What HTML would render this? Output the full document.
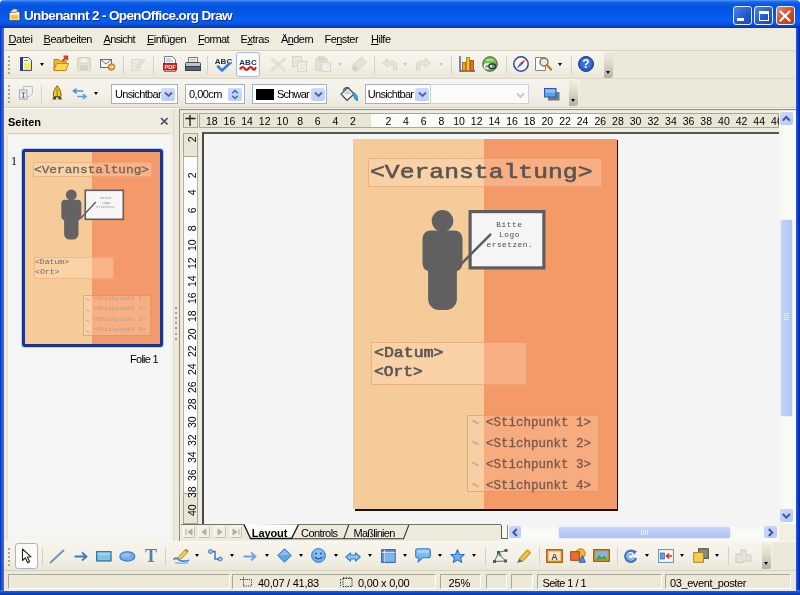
<!DOCTYPE html>
<html lang="de">
<head>
<meta charset="utf-8">
<title>Unbenannt 2 - OpenOffice.org Draw</title>
<style>
html,body{margin:0;padding:0;}
body{width:800px;height:595px;overflow:hidden;background:#ECE9D8;font-family:"Liberation Sans",sans-serif;font-size:11px;color:#000;}
#w{position:relative;width:800px;height:595px;overflow:hidden;background:#EEF1F6;will-change:transform;}
#w div,#w span,#w svg,#w i,#w b{position:absolute;box-sizing:border-box;display:block;}
#w u{text-decoration:underline;}
.t{white-space:nowrap;line-height:1;}
.m{font-family:"Liberation Mono",monospace;font-weight:bold;color:#5b5b5b;white-space:nowrap;line-height:1;}
.k{font-weight:normal;color:#5a5550;-webkit-text-stroke:0.6px #5a5550;}
.k2{font-weight:normal;color:#78584a;-webkit-text-stroke:0.3px #78584a;}
#title{left:0;top:0;width:800px;height:28px;border-radius:4px 4px 0 0;background:linear-gradient(180deg,#5a98f6 0px,#2270ee 1.5px,#0d5ee8 3px,#0454e2 6px,#0355e6 12px,#0860f2 20px,#0656e6 24px,#0343c8 26px,#0236b0 28px);}
#title .tt{left:24px;top:9px;font-size:13.5px;font-weight:bold;color:#fff;text-shadow:1px 1px 0 #10308a;}
#bl{left:0;top:28px;width:4px;height:567px;background:linear-gradient(90deg,#0a2cb0,#1a52d8 1.5px,#2866e6 3px,#3a78ea 4px);}
#br{left:796px;top:28px;width:4px;height:567px;background:linear-gradient(90deg,#2a5ee0,#1344c8 1.5px,#0a2cb0 3px,#06209a 4px);}
#bb{left:0;top:589.5px;width:800px;height:5.5px;background:linear-gradient(180deg,#4a82ec 0,#1c58de 1.5px,#1046cc 3px,#0a2ca8 5.5px);}
.wb{top:5.5px;width:19px;height:19.5px;border:1px solid #e8f0ff;border-radius:3px;}
#menu{left:4px;top:28px;width:792px;height:22px;background:#EFEBDE;}
#menu span{top:6px;font-size:11px;}
.tb{background:linear-gradient(180deg,#f6f4ec 0,#f2f0e6 60%,#e9e6d8 100%);}
.sep{width:1px;background:#d6d3c6;}
.grip i{left:0;width:2px;height:2px;background:#a9a697;}
.end{background:linear-gradient(180deg,#f0ede2 0,#e2dece 40%,#b4b0a2 100%);border-radius:0 3px 3px 0;}
.dd{width:0;height:0;border-left:2.7px solid transparent;border-right:2.7px solid transparent;border-top:3px solid #000;}
.dd.g{border-top-color:#cbc8bc;}
.cb{background:#fff;border:1px solid #9fb1c6;}
.cb .tx{left:3px;top:4px;font-size:11px;}
.cbb{top:2.5px;width:14px;height:13px;background:linear-gradient(180deg,#cfdbfb,#bfcef7);border-radius:2px;}
.st{top:573.5px;height:15.5px;border:1px solid;border-color:#aca899 #fff #fff #aca899;}
.st .tx{top:2px;font-size:11px;}
.rn{font-size:10.5px;width:20px;text-align:center;line-height:1;}
</style>
</head>
<body>
<div id="w">

<div id="title"><svg style="left:7.5px;top:7.5px" width="13" height="13.5" viewBox="0 0 13 13.5"><path d="M1 4.5 L7 2.5 L12 3.5 V12.8 H1 Z" fill="#f6e6a4" stroke="#2a3a78" stroke-width="1"/><path d="M1 4.5 L6 0.8 L10.5 1.8 L7.5 4 Z" fill="#fdfdfd" stroke="#5a5a6a" stroke-width="0.8"/><rect x="3" y="6.5" width="7" height="4.8" fill="#f5c23c"/><path d="M3 6 H10" stroke="#fff" stroke-width="1"/></svg><span class="t tt" style="letter-spacing:-0.63px">Unbenannt 2 - OpenOffice.org Draw</span>
<div class="wb" style="left:732.5px;background:linear-gradient(135deg,#4a86ee,#2456cf 60%,#1d49bd)"><i style="left:3px;top:11px;width:7.5px;height:3px;background:#fff"></i></div>
<div class="wb" style="left:754px;background:linear-gradient(135deg,#4a86ee,#2456cf 60%,#1d49bd)"><i style="left:3.5px;top:4px;width:10.5px;height:10px;border:1px solid #fff;border-top-width:3px"></i></div>
<div class="wb" style="left:775.5px;background:linear-gradient(135deg,#e8876a,#d04a26 55%,#b83a1c)"><svg style="left:2.5px;top:3px" width="12" height="12" viewBox="0 0 12 12"><path d="M1.5 1.5 L10.5 10.5 M10.5 1.5 L1.5 10.5" stroke="#fff" stroke-width="2.2" stroke-linecap="round"/></svg></div>
</div>
<div style="left:3px;top:28px;width:794px;height:564px;background:#ECE9D8"></div>
<div id="bl"></div><div id="br"></div><div id="bb"></div>
<div id="menu">
<span class="t mi" style="left:4.5px;letter-spacing:-0.34px"><u>D</u>atei</span>
<span class="t mi" style="left:39.5px;letter-spacing:-0.47px"><u>B</u>earbeiten</span>
<span class="t mi" style="left:99.5px;letter-spacing:-0.66px"><u>A</u>nsicht</span>
<span class="t mi" style="left:143.0px;letter-spacing:-0.55px"><u>E</u>infügen</span>
<span class="t mi" style="left:194.0px;letter-spacing:-0.64px"><u>F</u>ormat</span>
<span class="t mi" style="left:236.5px;letter-spacing:-0.45px">E<u>x</u>tras</span>
<span class="t mi" style="left:277.0px;letter-spacing:-0.58px">Ä<u>n</u>dern</span>
<span class="t mi" style="left:320.5px;letter-spacing:-0.54px">Fe<u>n</u>ster</span>
<span class="t mi" style="left:367.0px;letter-spacing:-0.50px"><u>H</u>ilfe</span>
</div>
<div style="left:4px;top:50px;width:792px;height:1px;background:#d8d4c4"></div>
<div class="tb" style="left:4px;top:51px;width:609px;height:27px"></div>
<div class="tb" style="left:4px;top:79px;width:575px;height:28px"></div>
<div style="left:4px;top:78px;width:792px;height:1px;background:#dcd8c8"></div>
<div style="left:4px;top:107px;width:792px;height:1px;background:#d6d2c2"></div>
<div style="left:4px;top:108px;width:792px;height:1px;background:#f8f7f2"></div>
<div class="grip" style="left:8px;top:56px;width:2px;height:20px"><i style="top:0px"></i><i style="top:4px"></i><i style="top:8px"></i><i style="top:12px"></i><i style="top:16px"></i></div>
<div class="grip" style="left:8px;top:85px;width:2px;height:20px"><i style="top:0px"></i><i style="top:4px"></i><i style="top:8px"></i><i style="top:12px"></i><i style="top:16px"></i></div>
<svg style="left:19.0px;top:56.0px" width="14" height="16" viewBox="0 0 14 16"><path d="M1.5 1.5 H9.5 L12.5 4.5 V14.5 H1.5 Z" fill="#fdfdf6" stroke="#3a4a86" stroke-width="1"/><rect x="1" y="1" width="3" height="14" fill="#2c3c7c"/><path d="M5 6.5 H12 V14 H5 Z" fill="#f0ec6c"/><path d="M5 4.5 H9" stroke="#8a8a8a" stroke-width="1"/></svg>
<i class="dd" style="left:40.0px;top:63.0px"></i>
<svg style="left:53.0px;top:55.0px" width="17" height="17" viewBox="0 0 17 17"><path d="M1 4.5 H6 L7.5 6 H13 V15.5 H1 Z" fill="#f0b530" stroke="#c07a10" stroke-width="1"/><path d="M1 15.5 L3.5 8.5 H15.5 L13 15.5 Z" fill="#fbd850" stroke="#c8881a" stroke-width="1"/><path d="M9.5 6 L14 1.5 M10.5 1.5 H14.2 V5.2" stroke="#d8401c" stroke-width="2" fill="none"/></svg>
<svg style="left:77.0px;top:57.0px" width="14" height="14" viewBox="0 0 14 14"><rect x="0.5" y="0.5" width="13" height="13" rx="1" fill="#e4e1d6" stroke="#d0cdc1"/><rect x="3" y="1" width="8" height="5" fill="#f4f2ea" stroke="#d8d5c9" stroke-width="0.8"/><rect x="3.5" y="8.5" width="7" height="5" fill="#d4d1c6" stroke="#d8d5c9" stroke-width="0.8"/></svg>
<svg style="left:100.0px;top:59.0px" width="16" height="12" viewBox="0 0 16 12"><rect x="0.5" y="0.5" width="11" height="8" fill="#f4f4f4" stroke="#6a6a7a"/><path d="M0.5 0.5 L6 5 L11.5 0.5" fill="none" stroke="#6a6a7a" stroke-width="0.9"/><circle cx="11.5" cy="8" r="3.3" fill="#e8a32c" stroke="#a86a0c" stroke-width="0.8"/><path d="M9.8 8 H13.2 M12 6.6 L13.3 8 L12 9.4" stroke="#fff" stroke-width="0.9" fill="none"/></svg>
<i class="sep" style="left:122.5px;top:56px;height:18px"></i>
<svg style="left:130.0px;top:57.0px" width="16" height="15" viewBox="0 0 16 15"><path d="M1.5 2.5 H10.5 V13.5 H1.5 Z" fill="#edebe2" stroke="#d8d5c9"/><path d="M3 6 H9 M3 8.5 H9 M3 11 H7" stroke="#e3e0d6" stroke-width="0.9"/><path d="M7 9 L13 2 L15 3.5 L9 10.5 L6.5 11.5 Z" fill="#e6e3d8" stroke="#d8d5c9" stroke-width="0.9"/></svg>
<i class="sep" style="left:153.0px;top:56px;height:18px"></i>
<svg style="left:163.0px;top:56.0px" width="14" height="16" viewBox="0 0 14 16"><path d="M1.5 0.5 H9.5 L12.5 3.5 V15.5 H1.5 Z" fill="#f8f8f8" stroke="#7a7a7a" stroke-width="1"/><path d="M3 3 H8 M3 5 H10" stroke="#9ab0d8" stroke-width="1"/><rect x="0.5" y="7.5" width="13" height="6.5" fill="#d8201c" stroke="#9a100c" stroke-width="0.8"/><text x="7" y="13" font-family="Liberation Sans,sans-serif" font-size="5.5" font-weight="bold" fill="#fff" text-anchor="middle">PDF</text></svg>
<svg style="left:185.0px;top:57.0px" width="16" height="15" viewBox="0 0 16 15"><path d="M3.5 0.5 H12.5 V6 H3.5 Z" fill="#fdfdfd" stroke="#6a6a6a" stroke-width="0.9"/><rect x="0.5" y="5.5" width="15" height="6" rx="1" fill="#bfc4cc" stroke="#4a4e58"/><rect x="0.5" y="9.5" width="15" height="4" fill="#5a6070" stroke="#3a3e48"/><path d="M5 2.5 H11 M5 4 H11" stroke="#a0a0a0" stroke-width="0.7"/></svg>
<i class="sep" style="left:207.0px;top:56px;height:18px"></i>
<svg style="left:215.0px;top:56.0px" width="17" height="17" viewBox="0 0 17 17"><text x="8.5" y="7.5" font-family="Liberation Sans,sans-serif" font-size="8" font-weight="bold" fill="#1c2e58" text-anchor="middle">ABC</text><path d="M3 10.5 L7 14.5 L14.5 7.5" fill="none" stroke="#3a7ad8" stroke-width="2.6" stroke-linecap="round" stroke-linejoin="round"/></svg>
<div style="left:236px;top:52px;width:24px;height:25px;border:1px solid #a9bde0;border-radius:3px;background:#fbfbf8"></div>
<svg style="left:239.0px;top:57.0px" width="18" height="15" viewBox="0 0 18 15"><text x="9" y="7.5" font-family="Liberation Sans,sans-serif" font-size="8" font-weight="bold" fill="#1c2e58" text-anchor="middle">ABC</text><path d="M1.5 11.5 Q3.5 8.8 5.5 11.5 T9.5 11.5 T13.5 11.5 T16.5 11" fill="none" stroke="#d81c1c" stroke-width="2.2" stroke-linecap="round"/></svg>
<svg style="left:270.0px;top:57.0px" width="17" height="15" viewBox="0 0 17 15"><path d="M2 2 L14.5 13 M14.5 2 L2 13" stroke="#e3e0d6" stroke-width="3" stroke-linecap="round"/></svg>
<svg style="left:292.0px;top:56.0px" width="16" height="16" viewBox="0 0 16 16"><rect x="0.5" y="0.5" width="9" height="10" fill="#e9e7de" stroke="#d8d5c9"/><rect x="5.5" y="5.5" width="9" height="10" fill="#efede4" stroke="#d8d5c9"/><path d="M7.5 8.5 H12.5 M7.5 10.5 H12.5 M7.5 12.5 H12.5" stroke="#e3e0d6" stroke-width="0.8"/></svg>
<svg style="left:315.0px;top:56.0px" width="17" height="16" viewBox="0 0 17 16"><rect x="0.5" y="2.5" width="12" height="12" rx="1" fill="#e2dfd4" stroke="#d8d5c9"/><rect x="3.5" y="0.5" width="6" height="4" fill="#d8d5ca" stroke="#d8d5c9" stroke-width="0.8"/><rect x="6.5" y="6.5" width="9" height="9" fill="#f0eee6" stroke="#d8d5c9"/></svg>
<i class="dd g" style="left:338.0px;top:63.0px"></i>
<svg style="left:351.0px;top:56.0px" width="17" height="16" viewBox="0 0 17 16"><path d="M10 1 L15.5 6 L8 13.5 L2.5 8.5 Z" fill="#e4e1d6" stroke="#d8d5c9" stroke-width="1"/><path d="M2.5 8.5 L0.8 13 L4 15.5 L8 13.5 Z" fill="#d6d3c8" stroke="#d8d5c9" stroke-width="0.9"/></svg>
<i class="sep" style="left:374.0px;top:56px;height:18px"></i>
<svg style="left:381.0px;top:57.0px" width="17" height="15" viewBox="0 0 17 15"><path d="M6.5 1.5 L1.5 6 L6.5 10.5 V8 H10.5 Q12.5 8 12.5 10 V13 H15.5 V9 Q15.5 4 10.5 4 H6.5 Z" fill="#e6e3d8" stroke="#d8d5c9" stroke-width="1" stroke-linejoin="round"/></svg>
<i class="dd g" style="left:403.0px;top:63.0px"></i>
<svg style="left:415.0px;top:57.0px" width="17" height="15" viewBox="0 0 17 15"><path d="M10.5 1.5 L15.5 6 L10.5 10.5 V8 H6.5 Q4.5 8 4.5 10 V13 H1.5 V9 Q1.5 4 6.5 4 H10.5 Z" fill="#e6e3d8" stroke="#d8d5c9" stroke-width="1" stroke-linejoin="round"/></svg>
<i class="dd g" style="left:438.5px;top:63.0px"></i>
<i class="sep" style="left:451.0px;top:56px;height:18px"></i>
<svg style="left:459.0px;top:56.0px" width="16" height="16" viewBox="0 0 16 16"><path d="M1 0 V15 H16" fill="none" stroke="#3a5a9a" stroke-width="1.4"/><rect x="3.5" y="6.5" width="3" height="8" fill="#f0a030" stroke="#a85a0c" stroke-width="0.8"/><rect x="7.5" y="1.5" width="3" height="13" fill="#f0c030" stroke="#a87a0c" stroke-width="0.8"/><rect x="11.5" y="4.5" width="3" height="10" fill="#e87020" stroke="#a8400c" stroke-width="0.8"/></svg>
<svg style="left:482.0px;top:56.0px" width="16" height="16" viewBox="0 0 16 16"><circle cx="8" cy="8" r="7.3" fill="#6cb84a" stroke="#3a6a2a" stroke-width="1"/><path d="M3 4 Q8 1 13 4 Q10 6 8 5 Q5 7 3 4 Z" fill="#a8dc8a"/><rect x="2.5" y="8" width="6.5" height="4.6" rx="2.3" fill="none" stroke="#fff" stroke-width="1.5"/><rect x="7" y="8" width="6.5" height="4.6" rx="2.3" fill="none" stroke="#2a3a4a" stroke-width="1.5"/></svg>
<i class="sep" style="left:506.0px;top:56px;height:18px"></i>
<svg style="left:512.5px;top:56.0px" width="16" height="16" viewBox="0 0 16 16"><circle cx="8" cy="8" r="7.2" fill="#f6f8fc" stroke="#2a4a9a" stroke-width="1.5"/><path d="M12.5 3.5 L9 9 L7 7 Z" fill="#d8201c"/><path d="M3.5 12.5 L9 9 L7 7 Z" fill="#3a6ad8"/></svg>
<svg style="left:534.5px;top:56.0px" width="17" height="16" viewBox="0 0 17 16"><path d="M0.5 1.5 H7.5 L10.5 4.5 V14.5 H0.5 Z" fill="#fafafa" stroke="#7a7a7a" stroke-width="0.9"/><circle cx="9" cy="6" r="4" fill="#d8ecfa" stroke="#7a6a2a" stroke-width="1.3"/><path d="M12 9 L16 13.5" stroke="#b8860c" stroke-width="2.4" stroke-linecap="round"/></svg>
<i class="dd" style="left:558.0px;top:63.0px"></i>
<i class="sep" style="left:570.5px;top:56px;height:18px"></i>
<svg style="left:578.0px;top:56.0px" width="16" height="16" viewBox="0 0 16 16"><circle cx="8" cy="8" r="7.5" fill="#2a5ac8" stroke="#1a3a8a" stroke-width="1"/><circle cx="8" cy="7" r="5.5" fill="#4a7ae0" opacity="0.7"/><text x="8" y="12.2" font-family="Liberation Sans,sans-serif" font-size="12" font-weight="bold" fill="#fff" text-anchor="middle">?</text></svg>
<div class="end" style="left:604px;top:51px;width:9px;height:27px"></div>
<i class="dd" style="left:605.5px;top:71.0px"></i>
<svg style="left:18.8px;top:85.8px" width="15" height="14.5" viewBox="0 0 16 16"><path d="M4.5 0.5 H14.5 V8.5 L11.5 11.5 H4.5 Z" fill="#f2f2f0" stroke="#b4bac2" stroke-width="1"/><rect x="0.5" y="4.5" width="8" height="10" fill="#f6f6f6" stroke="#8e98aa" stroke-width="1"/><path d="M2.5 7.5 H6.5 M4.5 7.5 V12.5 M3 12.5 H6" stroke="#5a6478" stroke-width="1.1"/></svg>
<i class="sep" style="left:41.0px;top:85px;height:18px"></i>
<svg style="left:52.0px;top:85.3px" width="10.4" height="15" viewBox="0 0 10.4 15"><path d="M5.2 0.7 Q0.2 7 1.6 11.5 H8.8 Q10.2 7 5.2 0.7 Z" fill="#f2cc2e" stroke="#6e5c14" stroke-width="1"/><path d="M5.2 3.5 V11" stroke="#8a7418" stroke-width="1"/><path d="M1.2 12 H9.2 L9.8 14.6 H0.6 Z" fill="#4e4a3a"/><path d="M4 12.5 H6.4 V14.6 H4 Z" fill="#f0ede2"/></svg>
<svg style="left:71.5px;top:87.5px" width="15" height="12" viewBox="0 0 15 12"><path d="M11.5 3 H2 M4.6 0.6 L1.4 3 L4.6 5.4" fill="none" stroke="#4a92dc" stroke-width="1.5"/><path d="M5 8.5 H13.5 M10.8 6.1 L14 8.5 L10.8 10.9" fill="none" stroke="#5aa0e4" stroke-width="1.5"/></svg>
<i class="dd" style="left:94.0px;top:92.0px"></i>
<div class="cb" style="left:111px;top:84px;width:67px;height:20px"><span class="tx" style="width:46.5px;height:12px;overflow:hidden"><span class="t" style="left:0;top:0;letter-spacing:-0.66px">Unsichtbar</span></span><i class="cbb" style="left:49px"></i><svg style="left:51.5px;top:6.0px" width="9" height="7" viewBox="0 0 9 7"><path d="M1 1.5 L4.5 5 L8 1.5" fill="none" stroke="#4a62a8" stroke-width="1.8"/></svg></div>
<div class="cb" style="left:185px;top:84px;width:60px;height:20px"><span class="t tx" style="letter-spacing:-0.51px">0,00cm</span><i class="cbb" style="left:42px"></i><svg style="left:45px;top:3.5px" width="8" height="11" viewBox="0 0 8 11"><path d="M1.2 4.2 L4 1.5 L6.8 4.2 M1.2 6.8 L4 9.5 L6.8 6.8" fill="none" stroke="#4a62a8" stroke-width="1.5"/></svg></div>
<div class="cb" style="left:252px;top:84px;width:75px;height:20px"><i style="left:3px;top:4px;width:18px;height:11px;background:#000"></i><span class="t tx" style="left:24px;letter-spacing:-0.78px">Schwar</span><i class="cbb" style="left:58px"></i><svg style="left:60.5px;top:6.0px" width="9" height="7" viewBox="0 0 9 7"><path d="M1 1.5 L4.5 5 L8 1.5" fill="none" stroke="#4a62a8" stroke-width="1.8"/></svg></div>
<svg style="left:338.5px;top:85.5px" width="19.5" height="15.5" viewBox="0 0 19.5 15.5"><path d="M2 8 L9 1.5 L15 8 L8 14.5 Z" fill="#f2f4f6" stroke="#4a525e" stroke-width="1.2" stroke-linejoin="round"/><path d="M4 4.5 Q7 -0.5 10 3" fill="none" stroke="#4a525e" stroke-width="1.1"/><path d="M4.5 8 L9 4 L12.5 8 Z" fill="#c8d0d8"/><path d="M14 6.5 Q19.5 8 18.5 15 Q15 13.5 14.5 9.5 Z" fill="#3aa6d4" stroke="#1a78a8" stroke-width="0.7"/></svg>
<div class="cb" style="left:365px;top:84px;width:66px;height:20px"><span class="tx" style="left:1.8px;width:46.5px;height:12px;overflow:hidden"><span class="t" style="left:0;top:0;letter-spacing:-0.71px">Unsichtbar</span></span><i class="cbb" style="left:49px"></i><svg style="left:51.5px;top:6.0px" width="9" height="7" viewBox="0 0 9 7"><path d="M1 1.5 L4.5 5 L8 1.5" fill="none" stroke="#4a62a8" stroke-width="1.8"/></svg></div>
<div class="cb" style="left:430px;top:84px;width:99px;height:20px;border-color:#c9d4e0;background:#fbfbf9"><svg style="left:85.0px;top:6.5px" width="9" height="7" viewBox="0 0 9 7"><path d="M1 1.5 L4.5 5 L8 1.5" fill="none" stroke="#c9c7bc" stroke-width="1.8"/></svg></div>
<svg style="left:544.0px;top:88.0px" width="16" height="13" viewBox="0 0 16 13"><rect x="4" y="4" width="11.5" height="8.5" fill="#6a7a8a"/><rect x="0.5" y="0.5" width="11.5" height="8.5" fill="#5aa0ea" stroke="#2a5aa8"/><rect x="1.5" y="1.5" width="9.5" height="3" fill="#9ac8f6" opacity="0.8"/></svg>
<div class="end" style="left:569px;top:80px;width:9px;height:26px"></div>
<i class="dd" style="left:570.5px;top:99.0px"></i>
<div style="left:4px;top:109px;width:169px;height:433px;background:#EFEBDE"></div>
<span class="t" style="left:8px;top:117px;font-size:11px;font-weight:bold;letter-spacing:-0.00px">Seiten</span>
<svg style="left:159.5px;top:117px" width="8.5" height="8.5" viewBox="0 0 9 9"><path d="M1 1 L8 8 M8 1 L1 8" stroke="#454c66" stroke-width="1.7"/></svg>
<div style="left:7px;top:133px;width:162px;height:1px;background:#d2cec0"></div>
<div style="left:169px;top:135px;width:3.5px;height:406px;background:#F4F3ED"></div>
<div style="left:7px;top:135px;width:162px;height:406px;background:#F5F5F3;border-left:1px solid #e2dfd4"></div>
<span class="t" style="left:11px;top:154.5px;font-family:'Liberation Serif',serif;font-size:12px">1</span>
<div style="left:21px;top:148px;width:143px;height:200px;border-radius:4px;background:#b9cdf2"></div>
<div style="left:22px;top:149px;width:141px;height:198px;border-radius:3px;background:#1c3684"></div>
<div style="left:25px;top:152px;width:67px;height:192px;background:#F6CB9A"></div>
<div style="left:92px;top:152px;width:68px;height:192px;background:#F49A6A"></div>
<div style="left:33px;top:162px;width:119px;height:15px;background:rgba(255,225,190,0.35);border:1px solid rgba(230,150,100,0.5)"></div>
<span class="m" style="left:34px;top:164.8px;font-size:10.7px;font-weight:normal;color:#6f655b;-webkit-text-stroke:0.3px #6f655b;transform-origin:0 0;transform:scaleX(1.1952)">&lt;Veranstaltung&gt;</span>
<svg style="left:25px;top:152px" width="135" height="192" viewBox="25 152 135 192">
<circle cx="71.30" cy="194.90" r="5.40" fill="#636363"/><rect x="61.30" y="199.75" width="20.00" height="20.50" rx="4.00" fill="#636363"/><rect x="64.10" y="212.00" width="14.40" height="27.50" rx="5.50" fill="#636363"/>
<rect x="85.3" y="190.3" width="38" height="29" fill="#f6f6f6" stroke="#5f5f5f" stroke-width="1.6"/>
<path d="M80.5 218.5 L95.8 202" stroke="#5f5f5f" stroke-width="1.4"/>
</svg>
<span class="m" style="left:94px;top:197.0px;width:24px;text-align:center;font-size:3.6px;font-weight:normal;color:#8a8a8a">Bitte</span>
<span class="m" style="left:94px;top:201.5px;width:24px;text-align:center;font-size:3.6px;font-weight:normal;color:#8a8a8a">Logo</span>
<span class="m" style="left:94px;top:206.0px;width:24px;text-align:center;font-size:3.6px;font-weight:normal;color:#8a8a8a">ersetzen.</span>
<div style="left:34px;top:257px;width:80px;height:22px;background:rgba(255,225,190,0.35);border:1px solid rgba(230,150,100,0.45)"></div>
<span class="m" style="left:35px;top:259.3px;font-size:7.2px;color:#6a6660;font-weight:normal;transform-origin:0 0;transform:scaleX(1.1257)">&lt;Datum&gt;</span>
<span class="m" style="left:35px;top:268.5px;font-size:7.2px;color:#6a6660;font-weight:normal;transform-origin:0 0;transform:scaleX(1.1354)">&lt;Ort&gt;</span>
<div style="left:83px;top:295px;width:68px;height:41px;background:rgba(255,215,180,0.35);border:1px solid rgba(200,120,80,0.45)"></div>
<span class="m" style="left:93px;top:295.5px;font-size:5.8px;color:#bc9c86;font-weight:normal;transform-origin:0 0;transform:scaleX(1.0882)">&lt;Stichpunkt 1&gt;</span>
<i style="left:86px;top:299.0px;width:3px;height:1px;background:#c8a890;transform:rotate(30deg)"></i>
<span class="m" style="left:93px;top:306.1px;font-size:5.8px;color:#bc9c86;font-weight:normal;transform-origin:0 0;transform:scaleX(1.0882)">&lt;Stichpunkt 2&gt;</span>
<i style="left:86px;top:309.6px;width:3px;height:1px;background:#c8a890;transform:rotate(30deg)"></i>
<span class="m" style="left:93px;top:316.7px;font-size:5.8px;color:#bc9c86;font-weight:normal;transform-origin:0 0;transform:scaleX(1.0882)">&lt;Stichpunkt 3&gt;</span>
<i style="left:86px;top:320.2px;width:3px;height:1px;background:#c8a890;transform:rotate(30deg)"></i>
<span class="m" style="left:93px;top:327.3px;font-size:5.8px;color:#bc9c86;font-weight:normal;transform-origin:0 0;transform:scaleX(1.0882)">&lt;Stichpunkt 4&gt;</span>
<i style="left:86px;top:330.8px;width:3px;height:1px;background:#c8a890;transform:rotate(30deg)"></i>
<span class="t" style="left:130px;top:354px;font-size:11px;letter-spacing:-0.72px">Folie 1</span>
<div style="left:172.5px;top:109px;width:7px;height:433px;background:#ECE9D8;border-left:1px solid #dedbce"></div>
<i style="left:175px;top:306.5px;width:2px;height:2px;background:#a4a194"></i>
<i style="left:175px;top:311.7px;width:2px;height:2px;background:#a4a194"></i>
<i style="left:175px;top:316.9px;width:2px;height:2px;background:#a4a194"></i>
<i style="left:175px;top:322.1px;width:2px;height:2px;background:#a4a194"></i>
<i style="left:175px;top:327.3px;width:2px;height:2px;background:#a4a194"></i>
<i style="left:175px;top:332.5px;width:2px;height:2px;background:#a4a194"></i>
<i style="left:175px;top:337.7px;width:2px;height:2px;background:#a4a194"></i>
<div style="left:179px;top:108.7px;width:617px;height:433px;background:#EEEBDD;border-left:1px solid #8e8b7e;border-top:1px solid #8e8b7e"></div>
<div style="left:198.5px;top:112.5px;width:580.3px;height:15.5px;background:#E9E6D6;border:1px solid #a9a694"></div>
<div style="left:371px;top:113.5px;width:228.5px;height:13.5px;background:#FBFBF8"></div>
<div style="left:183.3px;top:112.5px;width:14.7px;height:15.5px;background:#E9E6D6;border:1px solid #a9a694"></div>
<svg style="left:184px;top:114px" width="13" height="13" viewBox="0 0 13 13"><path d="M1.5 4.5 H11.5 M6 1 V12" stroke="#222" stroke-width="1.4"/></svg>
<div style="left:199px;top:113px;width:579.5px;height:15px;overflow:hidden">
<span class="t rn" style="left:144.0px;top:3px">2</span>
<span class="t rn" style="left:126.4px;top:3px">4</span>
<span class="t rn" style="left:108.7px;top:3px">6</span>
<span class="t rn" style="left:91.1px;top:3px">8</span>
<span class="t rn" style="left:73.4px;top:3px">10</span>
<span class="t rn" style="left:55.7px;top:3px">12</span>
<span class="t rn" style="left:38.1px;top:3px">14</span>
<span class="t rn" style="left:20.4px;top:3px">16</span>
<span class="t rn" style="left:2.8px;top:3px">18</span>
<span class="t rn" style="left:179.4px;top:3px">2</span>
<span class="t rn" style="left:197.0px;top:3px">4</span>
<span class="t rn" style="left:214.7px;top:3px">6</span>
<span class="t rn" style="left:232.3px;top:3px">8</span>
<span class="t rn" style="left:250.0px;top:3px">10</span>
<span class="t rn" style="left:267.7px;top:3px">12</span>
<span class="t rn" style="left:285.3px;top:3px">14</span>
<span class="t rn" style="left:303.0px;top:3px">16</span>
<span class="t rn" style="left:320.6px;top:3px">18</span>
<span class="t rn" style="left:338.3px;top:3px">20</span>
<span class="t rn" style="left:356.0px;top:3px">22</span>
<span class="t rn" style="left:373.6px;top:3px">24</span>
<span class="t rn" style="left:391.3px;top:3px">26</span>
<span class="t rn" style="left:408.9px;top:3px">28</span>
<span class="t rn" style="left:426.6px;top:3px">30</span>
<span class="t rn" style="left:444.3px;top:3px">32</span>
<span class="t rn" style="left:461.9px;top:3px">34</span>
<span class="t rn" style="left:479.6px;top:3px">36</span>
<span class="t rn" style="left:497.2px;top:3px">38</span>
<span class="t rn" style="left:514.9px;top:3px">40</span>
<span class="t rn" style="left:532.6px;top:3px">42</span>
<span class="t rn" style="left:550.2px;top:3px">44</span>
<span class="t rn" style="left:567.9px;top:3px">46</span>
</div>
<div style="left:183.3px;top:132.5px;width:14.7px;height:391.5px;background:#FBFBF8;border-left:1px solid #b4b1a0;border-right:1px solid #b4b1a0"></div>
<div style="left:183.3px;top:132.5px;width:14.7px;height:24.3px;background:#E9E6D6;border:1px solid #a9a694"></div>
<div style="left:183.3px;top:493px;width:14.7px;height:31px;background:#E9E6D6;border:1px solid #a9a694"></div>
<span class="t rn" style="left:181.6px;top:134.2px;transform:rotate(-90deg)">2</span>
<span class="t rn" style="left:181.6px;top:169.6px;transform:rotate(-90deg)">2</span>
<span class="t rn" style="left:181.6px;top:187.2px;transform:rotate(-90deg)">4</span>
<span class="t rn" style="left:181.6px;top:204.9px;transform:rotate(-90deg)">6</span>
<span class="t rn" style="left:181.6px;top:222.5px;transform:rotate(-90deg)">8</span>
<span class="t rn" style="left:181.6px;top:240.2px;transform:rotate(-90deg)">10</span>
<span class="t rn" style="left:181.6px;top:257.9px;transform:rotate(-90deg)">12</span>
<span class="t rn" style="left:181.6px;top:275.5px;transform:rotate(-90deg)">14</span>
<span class="t rn" style="left:181.6px;top:293.2px;transform:rotate(-90deg)">16</span>
<span class="t rn" style="left:181.6px;top:310.8px;transform:rotate(-90deg)">18</span>
<span class="t rn" style="left:181.6px;top:328.5px;transform:rotate(-90deg)">20</span>
<span class="t rn" style="left:181.6px;top:346.2px;transform:rotate(-90deg)">22</span>
<span class="t rn" style="left:181.6px;top:363.8px;transform:rotate(-90deg)">24</span>
<span class="t rn" style="left:181.6px;top:381.5px;transform:rotate(-90deg)">26</span>
<span class="t rn" style="left:181.6px;top:399.1px;transform:rotate(-90deg)">28</span>
<span class="t rn" style="left:181.6px;top:416.8px;transform:rotate(-90deg)">30</span>
<span class="t rn" style="left:181.6px;top:434.5px;transform:rotate(-90deg)">32</span>
<span class="t rn" style="left:181.6px;top:452.1px;transform:rotate(-90deg)">34</span>
<span class="t rn" style="left:181.6px;top:469.8px;transform:rotate(-90deg)">36</span>
<span class="t rn" style="left:181.6px;top:487.4px;transform:rotate(-90deg)">38</span>
<span class="t rn" style="left:181.6px;top:505.1px;transform:rotate(-90deg)">40</span>
<div style="left:202px;top:132px;width:576.8px;height:391.8px;background:#F4F4F4;border-left:2px solid #4a4a46;border-top:2px solid #55554f"></div>
<div style="left:355px;top:139.5px;width:263px;height:371.5px;background:#111"></div>
<div style="left:353px;top:139px;width:131px;height:370px;background:#F6CB9A"></div>
<div style="left:484px;top:139px;width:132.5px;height:370px;background:#F49A68"></div>
<div style="left:367.5px;top:157.5px;width:234px;height:29.5px;background:rgba(255,225,195,0.30);border:1px solid rgba(226,150,100,0.55)"></div>
<span class="m k" style="left:369.5px;top:161.6px;font-size:21px;transform-origin:0 0;transform:scaleX(1.1771)">&lt;Veranstaltung&gt;</span>
<svg style="left:353px;top:139px" width="263" height="370" viewBox="353 139 263 370">
<circle cx="442.50" cy="220.80" r="10.80" fill="#606060"/><rect x="422.50" y="230.50" width="40.00" height="41.00" rx="8.00" fill="#606060"/><rect x="428.10" y="255.00" width="28.80" height="55.00" rx="11.00" fill="#606060"/>
<rect x="470.1" y="211.6" width="73.8" height="56.3" fill="#f5f5f5" stroke="#5e5e5e" stroke-width="3.2"/>
<path d="M460.4 264.8 L490.3 234.6" stroke="#5e5e5e" stroke-width="2.5" stroke-linecap="round"/>
</svg>
<span class="m" style="left:496.3px;top:222.0px;font-size:7.8px;font-weight:normal;color:#4e4e4e;letter-spacing:0.56px">Bitte</span>
<span class="m" style="left:499.0px;top:231.7px;font-size:7.8px;font-weight:normal;color:#4e4e4e;letter-spacing:0.57px">Logo</span>
<span class="m" style="left:486.6px;top:241.6px;font-size:7.8px;font-weight:normal;color:#4e4e4e;letter-spacing:0.49px">ersetzen.</span>
<div style="left:371px;top:342px;width:156px;height:42.5px;background:rgba(255,225,195,0.30);border:1px solid rgba(226,150,100,0.55)"></div>
<span class="m k" style="left:374px;top:346.4px;font-size:14.4px;transform-origin:0 0;transform:scaleX(1.1497)">&lt;Datum&gt;</span>
<span class="m k" style="left:374px;top:364.6px;font-size:14.4px;transform-origin:0 0;transform:scaleX(1.1276)">&lt;Ort&gt;</span>
<div style="left:466.5px;top:415px;width:132.5px;height:77px;background:rgba(255,220,190,0.28);border:1px solid rgba(215,135,95,0.55)"></div>
<span class="m k2" style="left:485.5px;top:416.5px;font-size:12.2px;transform-origin:0 0;transform:scaleX(1.0253)">&lt;Stichpunkt 1&gt;</span>
<i style="left:472px;top:421.3px;width:7px;height:2px;background:#d7a88a;transform:rotate(28deg)"></i>
<span class="m k2" style="left:485.5px;top:437.5px;font-size:12.2px;transform-origin:0 0;transform:scaleX(1.0253)">&lt;Stichpunkt 2&gt;</span>
<i style="left:472px;top:442.3px;width:7px;height:2px;background:#d7a88a;transform:rotate(28deg)"></i>
<span class="m k2" style="left:485.5px;top:458.5px;font-size:12.2px;transform-origin:0 0;transform:scaleX(1.0253)">&lt;Stichpunkt 3&gt;</span>
<i style="left:472px;top:463.3px;width:7px;height:2px;background:#d7a88a;transform:rotate(28deg)"></i>
<span class="m k2" style="left:485.5px;top:479.5px;font-size:12.2px;transform-origin:0 0;transform:scaleX(1.0253)">&lt;Stichpunkt 4&gt;</span>
<i style="left:472px;top:484.3px;width:7px;height:2px;background:#d7a88a;transform:rotate(28deg)"></i>
<div style="left:779px;top:110.5px;width:17px;height:413.5px;background:linear-gradient(90deg,#f3f3ef,#fafaf8 40%,#f8f8f4)"></div>
<div style="left:780px;top:111.5px;width:12.6px;height:13.4px;border-radius:2px;background:linear-gradient(135deg,#cbd9fa,#b7c8f3)"><svg style="left:0;top:0" width="12.6" height="13.4" viewBox="0 0 12.6 13.4"><path d="M2.8 8.6 L6.3 5 L9.8 8.6" fill="none" stroke="#3c55a0" stroke-width="2"/></svg></div>
<div style="left:780px;top:509px;width:12.6px;height:13.4px;border-radius:2px;background:linear-gradient(135deg,#cbd9fa,#b7c8f3)"><svg style="left:0;top:0" width="12.6" height="13.4" viewBox="0 0 12.6 13.4"><path d="M2.8 5 L6.3 8.6 L9.8 5" fill="none" stroke="#3c55a0" stroke-width="2"/></svg></div>
<div style="left:779.8px;top:218.6px;width:12.8px;height:198.4px;border-radius:2.5px;border:1px solid #e6edfd;background:linear-gradient(90deg,#c4d3f8,#bbccf6 50%,#b2c3f0)"></div>
<i style="left:783.5px;top:313px;width:5px;height:1px;background:#e4ebfc"></i>
<i style="left:783.5px;top:315px;width:5px;height:1px;background:#e4ebfc"></i>
<i style="left:783.5px;top:317px;width:5px;height:1px;background:#e4ebfc"></i>
<i style="left:783.5px;top:319px;width:5px;height:1px;background:#e4ebfc"></i>
<div style="left:181px;top:524px;width:321px;height:17px;background:#EDEADC;border-top:1px solid #77746a"></div>
<div style="left:183px;top:526px;width:12px;height:12px;border:1px solid #fbfaf5;border-right-color:#c4c0b0;border-bottom-color:#c4c0b0;border-radius:2px;background:#F1EEE2"><svg style="left:-1px;top:-1px" width="12" height="12" viewBox="0 0 12 12"><path d="M3 3 V9 M9 3 L5 6 L9 9 Z" fill="#b4b0a1" stroke="#b4b0a1" stroke-width="1"/></svg></div>
<div style="left:198px;top:526px;width:12px;height:12px;border:1px solid #fbfaf5;border-right-color:#c4c0b0;border-bottom-color:#c4c0b0;border-radius:2px;background:#F1EEE2"><svg style="left:-1px;top:-1px" width="12" height="12" viewBox="0 0 12 12"><path d="M8 3 L4 6 L8 9 Z" fill="#b4b0a1" stroke="#b4b0a1" stroke-width="1"/></svg></div>
<div style="left:214px;top:526px;width:12px;height:12px;border:1px solid #fbfaf5;border-right-color:#c4c0b0;border-bottom-color:#c4c0b0;border-radius:2px;background:#F1EEE2"><svg style="left:-1px;top:-1px" width="12" height="12" viewBox="0 0 12 12"><path d="M4 3 L8 6 L4 9 Z" fill="#b4b0a1" stroke="#b4b0a1" stroke-width="1"/></svg></div>
<div style="left:230px;top:526px;width:12px;height:12px;border:1px solid #fbfaf5;border-right-color:#c4c0b0;border-bottom-color:#c4c0b0;border-radius:2px;background:#F1EEE2"><svg style="left:-1px;top:-1px" width="12" height="12" viewBox="0 0 12 12"><path d="M3 3 L7 6 L3 9 Z M9 3 V9" fill="#b4b0a1" stroke="#b4b0a1" stroke-width="1"/></svg></div>
<svg style="left:240px;top:524px" width="180" height="17" viewBox="240 524 180 17"><path d="M244 524 L250.5 538.5 H291.5 L298 524.5 Z" fill="#FBFBF8"/><path d="M244 524.5 L250.5 538.5 H291.5 L298.3 525" fill="none" stroke="#111" stroke-width="1.3"/><path d="M292 538.7 H343.8 L348.7 525" fill="none" stroke="#333" stroke-width="1.1"/><path d="M344 538.7 H403.6 L408.8 525" fill="none" stroke="#333" stroke-width="1.1"/></svg>
<span class="t" style="left:251.8px;top:527.5px;font-size:11px;font-weight:bold;letter-spacing:-0.09px">Layout</span>
<span class="t" style="left:301px;top:527.5px;font-size:11px;letter-spacing:-0.56px">Controls</span>
<span class="t" style="left:353.5px;top:527.5px;font-size:11px;letter-spacing:-0.74px">Maßlinien</span>
<div style="left:501px;top:524px;width:7px;height:17px;background:#F4F3EC"></div><div style="left:501px;top:524.5px;width:7px;height:14.5px;background:#F7F6F0;border-left:1px solid #5c594e;border-bottom:1px solid #5c594e;border-right:1px solid #8a877a"></div>
<div style="left:508px;top:524px;width:271px;height:17px;background:linear-gradient(180deg,#f3f3ef,#fafaf8 40%,#f8f8f4)"></div>
<div style="left:508.8px;top:526px;width:12.6px;height:12.4px;border-radius:2px;background:linear-gradient(135deg,#cbd9fa,#b7c8f3)"><svg style="left:0;top:0" width="12.6" height="13.4" viewBox="0 0 12.6 13.4"><path d="M7.8 3 L4.4 6.5 L7.8 10" fill="none" stroke="#3c55a0" stroke-width="2"/></svg></div>
<div style="left:764px;top:526px;width:12.6px;height:12.4px;border-radius:2px;background:linear-gradient(135deg,#cbd9fa,#b7c8f3)"><svg style="left:0;top:0" width="12.6" height="13.4" viewBox="0 0 12.6 13.4"><path d="M4.8 3 L8.2 6.5 L4.8 10" fill="none" stroke="#3c55a0" stroke-width="2"/></svg></div>
<div style="left:558px;top:526px;width:172.5px;height:12.5px;border-radius:2.5px;border:1px solid #e6edfd;background:linear-gradient(180deg,#c6d5fa,#bbccf6 50%,#b2c3f0)"></div>
<i style="left:641px;top:529.5px;width:1px;height:5px;background:#e4ebfc"></i>
<i style="left:643px;top:529.5px;width:1px;height:5px;background:#e4ebfc"></i>
<i style="left:645px;top:529.5px;width:1px;height:5px;background:#e4ebfc"></i>
<i style="left:647px;top:529.5px;width:1px;height:5px;background:#e4ebfc"></i>
<div style="left:779px;top:524px;width:17px;height:17px;background:#F2EFE3"></div>
<div style="left:4px;top:541px;width:792px;height:1px;background:#f8f7f2"></div>
<div class="tb" style="left:4px;top:542px;width:768px;height:28px"></div>
<div class="grip" style="left:8px;top:548px;width:2px;height:20px"><i style="top:0px"></i><i style="top:4px"></i><i style="top:8px"></i><i style="top:12px"></i><i style="top:16px"></i></div>
<div style="left:15px;top:543px;width:23px;height:26px;border:1px solid #a9b4c8;border-radius:3px;background:#fcfcfa"></div>
<svg style="left:21.0px;top:548.0px" width="11" height="16" viewBox="0 0 11 16"><path d="M1.5 1 V12.5 L4.3 9.8 L6.6 14.8 L8.6 13.8 L6.4 9 L10 8.8 Z" fill="#fff" stroke="#222" stroke-width="1.1" stroke-linejoin="round"/></svg>
<i class="sep" style="left:41.5px;top:547px;height:18px"></i>
<svg style="left:49.0px;top:548.5px" width="16" height="15" viewBox="0 0 16 15"><path d="M1 14 L15 1" stroke="#6f8fbf" stroke-width="1.8"/></svg>
<svg style="left:74.0px;top:551.0px" width="14" height="11" viewBox="0 0 14 11"><path d="M0.5 5.5 H12 M8 1.5 L12.5 5.5 L8 9.5" fill="none" stroke="#3f78b8" stroke-width="1.8"/></svg>
<svg style="left:96.0px;top:551.0px" width="16" height="11" viewBox="0 0 16 11"><rect x="0.7" y="0.7" width="14.3" height="9.3" fill="#7cc4e2" stroke="#2f6a9c" stroke-width="1.2"/><rect x="1.5" y="1.5" width="12.7" height="3" fill="#a8dcf0" opacity=".7"/></svg>
<svg style="left:119.0px;top:551.0px" width="17" height="11" viewBox="0 0 17 11"><ellipse cx="8.3" cy="5.4" rx="7.5" ry="4.7" fill="#6faeea" stroke="#3f7ac8" stroke-width="1.1"/><ellipse cx="7" cy="4" rx="4.5" ry="2" fill="#9acaf6" opacity=".7"/></svg>
<span class="t" style="left:145px;top:547px;font-family:'Liberation Serif',serif;font-weight:bold;font-size:18px;color:#5c7eae">T</span>
<i class="sep" style="left:165.0px;top:547px;height:18px"></i>
<svg style="left:173.0px;top:547.5px" width="17" height="16" viewBox="0 0 17 16"><path d="M1 11 Q3 9.5 5 11 Q8 14.5 15.5 12.5" fill="none" stroke="#3f8ad8" stroke-width="1.8" stroke-linecap="round"/><path d="M2 14.5 Q8 16 15 14.8" fill="none" stroke="#7ab8ee" stroke-width="1.4"/><path d="M5.5 9 L12.5 1.5 L15 3.8 L8 11 L5 11.5 Z" fill="#f2cf4c" stroke="#a8842a" stroke-width="0.9"/><path d="M12.5 1.5 L15 3.8" stroke="#d8705a" stroke-width="2"/></svg>
<i class="dd" style="left:195.0px;top:554.0px"></i>
<svg style="left:208.0px;top:549.0px" width="15" height="13" viewBox="0 0 15 13"><path d="M2.5 2.5 H7 V10 H12.5" fill="none" stroke="#3f78b8" stroke-width="1.5"/><circle cx="2.5" cy="2.5" r="2" fill="#9acaf4" stroke="#3f78b8" stroke-width="1"/><circle cx="12.2" cy="10" r="2" fill="#9acaf4" stroke="#3f78b8" stroke-width="1"/></svg>
<i class="dd" style="left:230.0px;top:554.0px"></i>
<svg style="left:243.0px;top:551.0px" width="14" height="11" viewBox="0 0 14 11"><path d="M0.5 5.5 H12 M8 1.5 L12.5 5.5 L8 9.5" fill="none" stroke="#6aa6e2" stroke-width="1.8"/></svg>
<i class="dd" style="left:264.5px;top:554.0px"></i>
<svg style="left:276.5px;top:547.5px" width="15" height="15" viewBox="0 0 15 15"><path d="M7.5 0.7 L14.3 7.5 L7.5 14.3 L0.7 7.5 Z" fill="#5fa6e6" stroke="#3a78c0" stroke-width="1"/><path d="M7.5 2 L12.5 7 H2.5 Z" fill="#94c8f4" opacity=".8"/></svg>
<i class="dd" style="left:298.5px;top:554.0px"></i>
<svg style="left:311.0px;top:548.0px" width="15" height="15" viewBox="0 0 15 15"><circle cx="7.5" cy="7.5" r="6.9" fill="#6cb0ec" stroke="#3a78c4" stroke-width="1"/><circle cx="7.5" cy="6" r="4.8" fill="#9ccef6" opacity=".6"/><circle cx="5" cy="5.6" r="1" fill="#1f4f96"/><circle cx="10" cy="5.6" r="1" fill="#1f4f96"/><path d="M4 9 Q7.5 12.5 11 9" fill="none" stroke="#1f4f96" stroke-width="1.1"/></svg>
<i class="dd" style="left:333.5px;top:554.0px"></i>
<svg style="left:345.0px;top:551.5px" width="16" height="10" viewBox="0 0 16 10"><path d="M0.8 5 L5.5 0.8 V3 H10.5 V0.8 L15.2 5 L10.5 9.2 V7 H5.5 V9.2 Z" fill="#8ec4f2" stroke="#3a7cc8" stroke-width="1.1" stroke-linejoin="round"/></svg>
<i class="dd" style="left:367.5px;top:554.0px"></i>
<svg style="left:381.0px;top:548.5px" width="15" height="14" viewBox="0 0 15 14"><rect x="0.7" y="0.7" width="13.4" height="12.6" fill="#5f9fe4" stroke="#2f62b0" stroke-width="1.2"/><path d="M0.7 3.5 H14 M3.7 0.7 V13.3" stroke="#c8e0fa" stroke-width="1"/><rect x="4.5" y="4.3" width="9" height="8.4" fill="#7cb6ee"/></svg>
<i class="dd" style="left:402.5px;top:554.0px"></i>
<svg style="left:415.0px;top:548.0px" width="16" height="15" viewBox="0 0 16 15"><path d="M2.5 0.7 H13 Q15.3 0.7 15.3 3 V7.5 Q15.3 9.8 13 9.8 H7.5 L3 14 L4 9.8 H2.5 Q0.7 9.8 0.7 7.5 V3 Q0.7 0.7 2.5 0.7 Z" fill="#7cbcf0" stroke="#3a7cc8" stroke-width="1.1" stroke-linejoin="round"/><rect x="2" y="2" width="12" height="3" rx="1.2" fill="#b2dcfa" opacity=".7"/></svg>
<i class="dd" style="left:437.5px;top:554.0px"></i>
<svg style="left:449.5px;top:548.5px" width="15" height="14" viewBox="0 0 15 14"><path d="M7.5 0.8 L9.4 5.2 L14.2 5.6 L10.6 8.8 L11.7 13.4 L7.5 10.9 L3.3 13.4 L4.4 8.8 L0.8 5.6 L5.6 5.2 Z" fill="#6cb0ee" stroke="#2f6cc0" stroke-width="1.1" stroke-linejoin="round"/></svg>
<i class="dd" style="left:472.0px;top:554.0px"></i>
<i class="sep" style="left:484.5px;top:547px;height:18px"></i>
<svg style="left:492.0px;top:547.5px" width="17" height="16" viewBox="0 0 17 16"><path d="M2.5 13.5 L6.5 4.5 L14 2.5 M2.5 13.5 L13.5 13 L8 7" fill="none" stroke="#5a6470" stroke-width="1"/><rect x="1" y="12" width="3" height="3" fill="#4a5a6a"/><rect x="5" y="3" width="3" height="3" fill="#4a5a6a"/><rect x="12.5" y="1" width="3" height="3" fill="#4a5a6a"/><rect x="12" y="11.5" width="3" height="3" fill="#4a5a6a"/><rect x="6.7" y="5.7" width="2.6" height="2.6" fill="#3fa04a"/></svg>
<svg style="left:516.0px;top:548.0px" width="16" height="15" viewBox="0 0 16 15"><path d="M3 11 L11 2 L14.5 5 L6.5 13.5 Z" fill="#f0c040" stroke="#a87a1c" stroke-width="0.9"/><path d="M3 11 L6.5 13.5 L1 15 Z" fill="#5a6a8a"/><path d="M11 2 L14.5 5" stroke="#e8a020" stroke-width="2"/></svg>
<i class="sep" style="left:538.5px;top:547px;height:18px"></i>
<svg style="left:546.0px;top:548.5px" width="17" height="14" viewBox="0 0 17 14"><rect x="0.7" y="0.7" width="15.6" height="12.6" fill="#e8a040" stroke="#9a5a10" stroke-width="1.2"/><rect x="2.5" y="2.5" width="12" height="9" fill="#fbe8c0"/><text x="8.5" y="10.5" font-family="Liberation Sans,sans-serif" font-weight="bold" font-size="9" text-anchor="middle" fill="#2a4a9a">A</text></svg>
<svg style="left:570.0px;top:548.0px" width="16" height="15" viewBox="0 0 16 15"><circle cx="10.5" cy="5.5" r="4.8" fill="#f2b23a" stroke="#b8781a" stroke-width="0.9"/><rect x="0.7" y="3.7" width="8.6" height="8.6" fill="#e87030" stroke="#a8400c" stroke-width="1"/><path d="M9 14.3 L12.5 7.5 L15.3 14.3 Z" fill="#4a8ad8" stroke="#2a5aa8" stroke-width="0.9"/></svg>
<svg style="left:593.0px;top:549.0px" width="17" height="13" viewBox="0 0 17 13"><rect x="0.7" y="0.7" width="15.6" height="11.6" fill="#d89a30" stroke="#8a5a10" stroke-width="1.2"/><rect x="2.5" y="2.5" width="12" height="8" fill="#7ab8e8"/><path d="M2.5 10.5 L6 6 L9 8.5 L11.5 6.5 L14.5 10.5 Z" fill="#5a9a3a"/></svg>
<i class="sep" style="left:617.0px;top:547px;height:18px"></i>
<svg style="left:622.5px;top:548.5px" width="16" height="14" viewBox="0 0 16 14"><path d="M13 9 A5.5 5.5 0 1 1 11.5 3.2" fill="none" stroke="#3f78c0" stroke-width="2.4"/><path d="M10 8.3 A2.6 2.6 0 1 1 9 5.6" fill="none" stroke="#6aa6e2" stroke-width="1.6"/><path d="M9.5 0.8 L14 2.2 L11 5.8 Z" fill="#3f78c0"/></svg>
<i class="dd" style="left:645.0px;top:554.0px"></i>
<svg style="left:657.5px;top:548.5px" width="16" height="14" viewBox="0 0 16 14"><rect x="0.6" y="0.6" width="14.8" height="12.8" fill="#f8f8f4" stroke="#6a8ab8" stroke-width="1"/><rect x="2.5" y="4" width="4" height="6" fill="#5fa0e4" stroke="#2f62b0" stroke-width="0.7"/><path d="M14 7 H9 M11 4.5 L8.5 7 L11 9.5" fill="none" stroke="#d8301c" stroke-width="1.5"/></svg>
<i class="dd" style="left:680.0px;top:554.0px"></i>
<svg style="left:692.5px;top:548.0px" width="16" height="15" viewBox="0 0 16 15"><rect x="5.6" y="0.7" width="9.7" height="9.7" fill="#8a8a7a" stroke="#4a4a3a" stroke-width="1"/><rect x="0.7" y="4.6" width="9.7" height="9.7" fill="#f4d048" stroke="#a8842a" stroke-width="1"/></svg>
<i class="dd" style="left:714.5px;top:554.0px"></i>
<i class="sep" style="left:727.5px;top:547px;height:18px"></i>
<svg style="left:735.0px;top:548.5px" width="17" height="14" viewBox="0 0 17 14"><path d="M1 5 H6 V1 H11 V6 H16 V12 H8 V13.5 H1 Z" fill="#e6e3d8" stroke="#cfccbf" stroke-width="1"/><path d="M6 5 L8 7 M11 6 V9" stroke="#d6d3c8" stroke-width="1"/></svg>
<div class="end" style="left:762px;top:543px;width:9px;height:26px"></div>
<i class="dd" style="left:763.5px;top:562.0px"></i>
<div style="left:4px;top:570px;width:792px;height:1px;background:#d6d2c2"></div>
<div style="left:4px;top:571px;width:792px;height:20px;background:#ECE9D8"></div>
<div class="st" style="left:8px;width:222px"></div>
<div class="st" style="left:232px;width:204px"></div>
<div class="st" style="left:440px;width:41px"></div>
<div class="st" style="left:485.5px;width:21px"></div>
<div class="st" style="left:511px;width:22px"></div>
<div class="st" style="left:537px;width:124.5px"></div>
<div class="st" style="left:665px;width:126px"></div>
<svg style="left:239.5px;top:577.0px" width="12" height="10" viewBox="0 0 12 10"><path d="M3.5 0 V9.5 M0 2.5 H11.5" stroke="#1a3a8a" stroke-width="1" stroke-dasharray="1.2 1"/><path d="M3.5 9 H11.5 V2.5" fill="none" stroke="#4a4a4a" stroke-width="1" stroke-dasharray="1.2 1"/></svg>
<span class="t" style="left:258px;top:577.5px;font-size:11px;letter-spacing:-0.25px">40,07 / 41,83</span>
<svg style="left:339.5px;top:577.0px" width="13" height="10" viewBox="0 0 13 10"><rect x="3" y="1.5" width="9" height="8" fill="none" stroke="#333" stroke-width="1" stroke-dasharray="1.5 1"/><path d="M0.5 2 V9 M3 0.3 H12" stroke="#333" stroke-width="1" stroke-dasharray="1.5 1.5"/></svg>
<span class="t" style="left:358px;top:577.5px;font-size:11px;letter-spacing:-0.27px">0,00 x 0,00</span>
<span class="t" style="left:448.5px;top:577.5px;font-size:11px;letter-spacing:-0.18px">25%</span>
<span class="t" style="left:542.5px;top:577.5px;font-size:11px;letter-spacing:-0.55px">Seite 1 / 1</span>
<span class="t" style="left:670px;top:577.5px;font-size:11px;letter-spacing:-0.40px">03_event_poster</span>
</div>
</body>
</html>
